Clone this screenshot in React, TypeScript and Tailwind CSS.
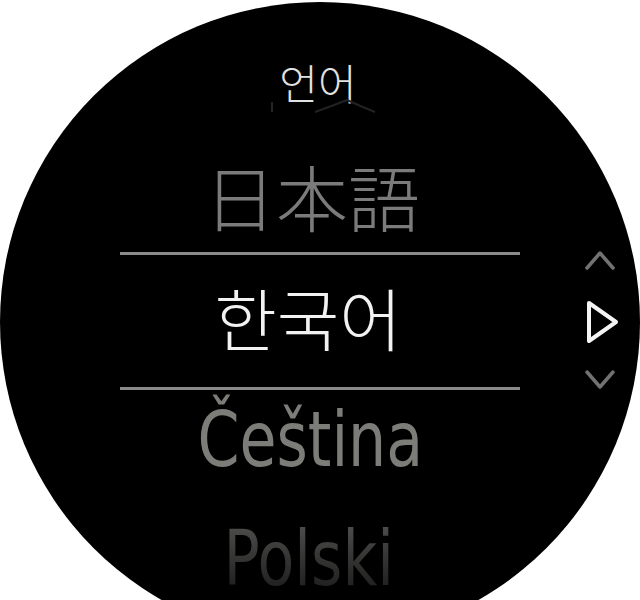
import React from 'react'

const cjk = { fontFamily: '"Noto Sans CJK KR", "Noto Sans CJK JP", sans-serif' }
const narrow = { fontFamily: '"Liberation Sans Narrow", "DejaVu Sans Condensed", sans-serif' }

function Divider() {
  return <div className="h-[3px] w-full shrink-0 bg-[#8a8a8a]" />
}

export default function App() {
  return (
    <div className="h-[600px] w-[640px] overflow-hidden bg-white">
      <div className="mt-[2px] flex h-[640px] w-[640px] rounded-full bg-black">
        <div className="w-[120px] shrink-0" />

        {/* language list */}
        <div className="flex w-[400px] shrink-0 flex-col items-center">
          <div
            className="mt-[56px] mr-[4px] h-[48px] text-[42px] font-light leading-[48px] text-[#e2e2e2]"
            style={cjk}
          >
            언어
          </div>
          <svg width="400" height="16" viewBox="0 0 400 16" className="-mt-[8px] shrink-0">
            <path d="M152 4 L152 14" stroke="#262626" strokeWidth="2" fill="none" />
            <path d="M195 14 Q212 8 227 2 Q240 8 255 14" stroke="#222222" strokeWidth="2" fill="none" />
          </svg>

          <div
            className="mt-[41px] mr-[16px] h-[80px] text-[72px] font-light leading-[80px] text-[#7b7b7b]"
            style={{ fontFamily: '"Noto Sans CJK JP", sans-serif' }}
          >
            日本語
          </div>
          <div className="h-[17px] shrink-0" />
          <Divider />
          <div
            className="mr-[24px] flex h-[132px] items-center pb-[8px] text-[68px] font-light leading-[80px] text-[#f2f2f2]"
            style={cjk}
          >
            한국어
          </div>
          <Divider />
          <div
            className="mt-[7px] mr-[20px] h-[85px] scale-x-[0.88] text-[76px] leading-[85px] text-[#7c7c78]"
            style={narrow}
          >
            Čeština
          </div>
          <div
            className="mt-[42px] mr-[22px] h-[70px] scale-x-[0.88] bg-gradient-to-b from-[#4e4e4c] to-[#1c1c1c] bg-clip-text text-[76px] leading-[70px] text-transparent"
            style={narrow}
          >
            Polski
          </div>
        </div>

        {/* scroll / select controls */}
        <div className="flex flex-1 flex-col items-start pl-[63px] pt-[246px]">
          <svg width="36" height="24" viewBox="0 0 36 24">
            <path d="M4 20 L17 5 L30 20" stroke="#727272" strokeWidth="3.5" fill="none" strokeLinecap="round" strokeLinejoin="round" />
          </svg>
          <svg width="40" height="48" viewBox="0 0 40 48" className="mt-[26px]">
            <path d="M6 5 L33 24 L6 43 Z" stroke="#f4f4f4" strokeWidth="4" fill="none" strokeLinejoin="round" />
          </svg>
          <svg width="36" height="24" viewBox="0 0 36 24" className="mt-[22px]">
            <path d="M4 4 L17 19 L30 4" stroke="#727272" strokeWidth="3.5" fill="none" strokeLinecap="round" strokeLinejoin="round" />
          </svg>
        </div>
      </div>
    </div>
  )
}
